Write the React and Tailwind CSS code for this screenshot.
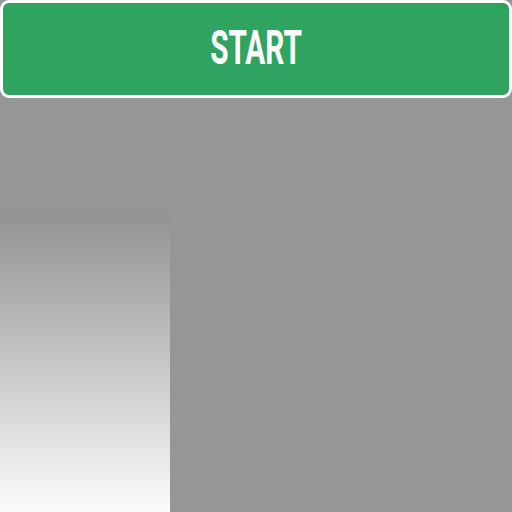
export default function App() {
  return (
    <div className="w-[512px] h-[512px] bg-[#969696] flex flex-col overflow-hidden">
      <div className="h-[98px] shrink-0 bg-[#2fa360] border-[3px] border-white rounded-[9px] flex items-center justify-center">
        <span
          className="text-white font-bold text-[48px] leading-none inline-block scale-x-[0.62] translate-y-[-1px]"
          style={{ fontFamily: '"Roboto", "Liberation Sans", sans-serif' }}
        >
          START
        </span>
      </div>
      <div className="flex-1 flex">
        <div className="w-[170px] mt-[116px] bg-linear-to-b from-[#939393] to-[#fcfcfc]" />
      </div>
    </div>
  );
}
